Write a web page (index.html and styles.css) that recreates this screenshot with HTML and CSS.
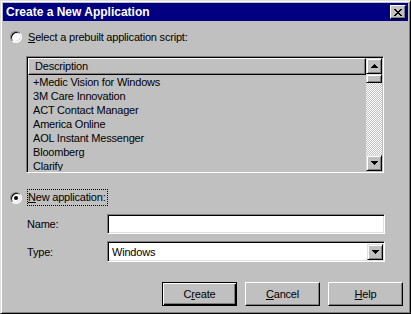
FILE: index.html
```html
<!DOCTYPE html>
<html>
<head>
<meta charset="utf-8">
<link rel="stylesheet" href="styles.css">
</head>
<body>
<div class="window">
  <div class="titlebar">
    <span class="title">Create a New Application</span>
    <span class="close"><svg width="8" height="7" viewBox="0 0 8 7" shape-rendering="crispEdges"><path d="M0 0h2v1H0zM6 0h2v1H6zM1 1h2v1H1zM5 1h2v1H5zM2 2h4v1H2zM3 3h2v1H3zM2 4h4v1H2zM1 5h2v1H1zM5 5h2v1H5zM0 6h2v1H0zM6 6h2v1H6z" fill="#000"/></svg></span>
  </div>
  <div class="content">
    <div class="radio-row r1">
      <span class="radio"></span>
      <span class="radio-label"><u>S</u>elect a prebuilt application script:</span>
    </div>
    <div class="listbox">
      <div class="list-main">
        <div class="list-header">Description</div>
        <div class="list-rows">
          <div class="row">+Medic Vision for Windows</div>
          <div class="row">3M Care Innovation</div>
          <div class="row">ACT Contact Manager</div>
          <div class="row">America Online</div>
          <div class="row">AOL Instant Messenger</div>
          <div class="row">Bloomberg</div>
          <div class="row">Clarify</div>
        </div>
      </div>
      <div class="scrollbar">
        <div class="sb-btn"><svg width="7" height="4" viewBox="0 0 7 4" shape-rendering="crispEdges"><path d="M3 0h1v1H3zM2 1h3v1H2zM1 2h5v1H1zM0 3h7v1H0z" fill="#000"/></svg></div>
        <div class="sb-thumb"></div>
        <div class="sb-track"></div>
        <div class="sb-btn"><svg width="7" height="4" viewBox="0 0 7 4" shape-rendering="crispEdges"><path d="M0 0h7v1H0zM1 1h5v1H1zM2 2h3v1H2zM3 3h1v1H3z" fill="#000"/></svg></div>
      </div>
    </div>
    <div class="radio-row r2">
      <span class="radio checked"></span>
      <span class="radio-label focus"><u>N</u>ew application:</span>
    </div>
    <div class="field-row name-row">
      <span class="field-label">Name:</span>
      <div class="textbox"></div>
    </div>
    <div class="field-row type-row">
      <span class="field-label">Type:</span>
      <div class="combo">
        <span class="combo-text">Windows</span>
        <span class="combo-btn"><svg width="7" height="4" viewBox="0 0 7 4" shape-rendering="crispEdges"><path d="M0 0h7v1H0zM1 1h5v1H1zM2 2h3v1H2zM3 3h1v1H3z" fill="#000"/></svg></span>
      </div>
    </div>
    <div class="buttons">
      <div class="btn default">C<u>r</u>eate</div>
      <div class="btn"><u>C</u>ancel</div>
      <div class="btn"><u>H</u>elp</div>
    </div>
  </div>
</div>
</body>
</html>
```
FILE: styles.css
```css
* { box-sizing: border-box; }
html, body { margin: 0; padding: 0; }
body {
  width: 411px;
  height: 314px;
  overflow: hidden;
  background: #c0c0c0;
  font-family: "Liberation Sans", Arial, sans-serif;
  font-size: 11px;
  letter-spacing: -0.2px;
  color: #000;
}
u { text-decoration: underline; text-underline-offset: 1px; }
.window {
  width: 411px;
  height: 314px;
  background: #c0c0c0;
  border: 1px solid;
  border-color: #dfdfdf #000 #000 #dfdfdf;
  box-shadow: inset 1px 1px #fff, inset -1px -1px #808080;
  padding: 2px;
  display: flex;
  flex-direction: column;
}
.titlebar {
  height: 18px;
  background: #000080;
  display: flex;
  align-items: center;
  justify-content: space-between;
  padding: 0 2px 0 3px;
}
.title {
  color: #fff;
  font-weight: bold;
  font-size: 12px;
  letter-spacing: 0;
  line-height: 18px;
}
.close {
  width: 16px;
  height: 14px;
  background: #c0c0c0;
  border: 1px solid;
  border-color: #fff #000 #000 #fff;
  box-shadow: inset -1px -1px #808080;
  display: flex;
  align-items: center;
  justify-content: center;
  padding-right: 1px;
}
.close svg { display: block; }
.content {
  flex: 1;
  display: flex;
  flex-direction: column;
  padding-left: 7px;
}
.radio-row {
  display: flex;
  align-items: center;
  height: 14px;
}
.r1 { margin-top: 9px; gap: 6px; }
.r2 { margin-top: 16px; height: 17px; gap: 5px; }
.radio {
  width: 12px;
  height: 12px;
  border-radius: 50%;
  border: 1px solid;
  border-color: #808080 #fff #fff #808080;
  background: #fff;
  box-shadow: inset 1px 1px #000, inset -1px -1px #dfdfdf;
  position: relative;
  flex: none;
}
.radio.checked::after {
  content: "";
  position: absolute;
  left: 3px;
  top: 3px;
  width: 4px;
  height: 4px;
  border-radius: 50%;
  background: #000;
}
.radio-label { line-height: 14px; white-space: nowrap; }
.radio-label.focus {
  border: 1px dotted #000;
  line-height: 15px;
  padding: 0 1px 0 0;
}
.listbox {
  margin-top: 12px;
  margin-left: 16px;
  width: 358px;
  height: 117px;
  border: 1px solid;
  border-color: #808080 #fff #fff #808080;
  box-shadow: inset 1px 1px #000, inset -1px -1px #c0c0c0;
  padding: 1px;
  display: flex;
  background: #c0c0c0;
}
.list-main {
  flex: 1;
  overflow: hidden;
  display: flex;
  flex-direction: column;
}
.list-header {
  height: 17px;
  flex: none;
  border: 1px solid;
  border-color: #fff #000 #000 #fff;
  box-shadow: inset -1px -1px #808080;
  padding-left: 6px;
  line-height: 15px;
}
.list-rows { padding-left: 5px; }
.row { height: 14px; line-height: 14px; white-space: nowrap; }
.scrollbar {
  width: 16px;
  flex: none;
  display: flex;
  flex-direction: column;
}
.sb-btn, .sb-thumb, .combo-btn {
  background: #c0c0c0;
  border: 1px solid;
  border-color: #dfdfdf #000 #000 #dfdfdf;
  box-shadow: inset 1px 1px #fff, inset -1px -1px #808080;
  display: flex;
  align-items: center;
  justify-content: center;
}
.sb-btn { height: 16px; flex: none; }
.sb-btn svg, .combo-btn svg { display: block; }
.sb-thumb { height: 9px; flex: none; }
.sb-track {
  flex: 1;
  background: repeating-conic-gradient(#fff 0 25%, #c0c0c0 0 50%) 0 0 / 2px 2px;
}
.field-row {
  display: flex;
  align-items: center;
  padding-left: 17px;
}
.field-label { width: 80px; flex: none; }
.name-row { margin-top: 8px; }
.type-row { margin-top: 7px; }
.textbox, .combo {
  width: 278px;
  background: #fff;
  border: 1px solid;
  border-color: #808080 #fff #fff #808080;
  box-shadow: inset 1px 1px #000, inset -1px -1px #dfdfdf;
}
.textbox { height: 20px; }
.combo {
  height: 21px;
  display: flex;
  align-items: center;
  justify-content: space-between;
  padding: 1px 1px 1px 4px;
}
.combo-btn { width: 16px; height: 16px; margin-top: 1px; }
.buttons {
  margin-top: 20px;
  display: flex;
  justify-content: flex-end;
  gap: 8px;
  padding-right: 5px;
}
.btn {
  width: 75px;
  height: 24px;
  border: 1px solid;
  border-color: #fff #000 #000 #fff;
  box-shadow: inset -1px -1px #808080;
  display: flex;
  align-items: center;
  justify-content: center;
  line-height: 14px;
}
.btn.default {
  border-color: #000;
  box-shadow: inset 1px 1px #fff, inset -1px -1px #000, inset -2px -2px #808080;
}
```
